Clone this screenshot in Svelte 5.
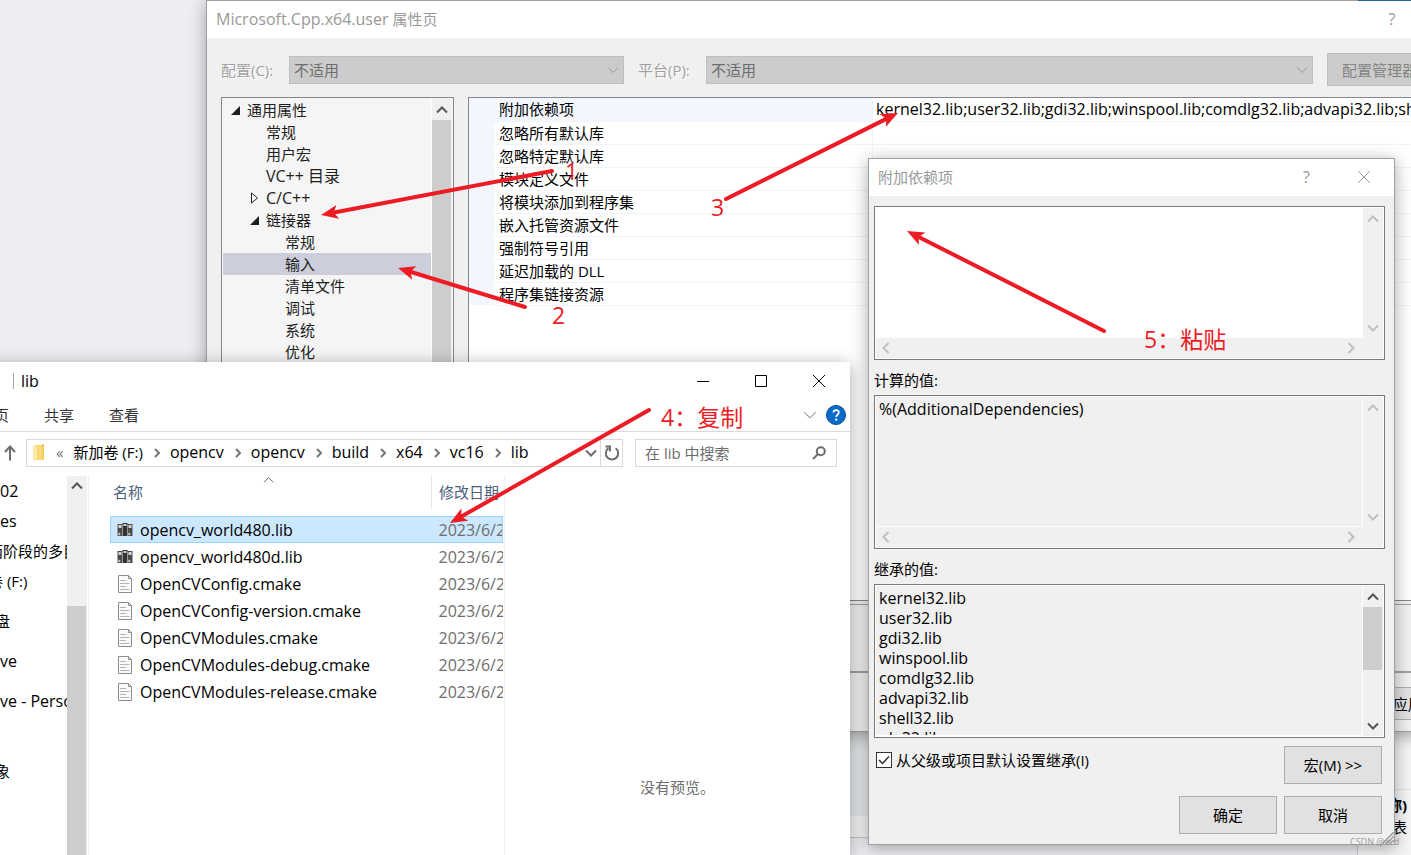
<script lang="ts">
  type Arrow = { from: [number, number]; to: [number, number] };

  const tree = [
    { label: "通用属性", level: 0, state: "open" },
    { label: "常规", level: 1 },
    { label: "用户宏", level: 1 },
    { label: "VC++ 目录", level: 1 },
    { label: "C/C++", level: 1, state: "closed" },
    { label: "链接器", level: 1, state: "open" },
    { label: "常规", level: 2 },
    { label: "输入", level: 2 },
    { label: "清单文件", level: 2 },
    { label: "调试", level: 2 },
    { label: "系统", level: 2 },
    { label: "优化", level: 2 },
  ];
  let selectedNode = $state(7);

  const properties = [
    {
      name: "附加依赖项",
      value:
        "kernel32.lib;user32.lib;gdi32.lib;winspool.lib;comdlg32.lib;advapi32.lib;shell32.lib",
    },
    { name: "忽略所有默认库", value: "" },
    { name: "忽略特定默认库", value: "" },
    { name: "模块定义文件", value: "" },
    { name: "将模块添加到程序集", value: "" },
    { name: "嵌入托管资源文件", value: "" },
    { name: "强制符号引用", value: "" },
    { name: "延迟加载的 DLL", value: "" },
    { name: "程序集链接资源", value: "" },
  ];

  const crumbs = ["新加卷 (F:)", "opencv", "opencv", "build", "x64", "vc16", "lib"];

  const places = [
    { label: "02" },
    { label: "es" },
    { label: "两阶段的多目标", cut: "far" },
    { label: "卷 (F:)", cut: "far" },
    { label: "盘", cut: "near", tall: true },
    { label: "ve", tall: true },
    { label: "ve - Personal", tall: true },
    { label: "象", cut: "near", last: true },
  ];

  const files = [
    { name: "opencv_world480.lib", kind: "lib" },
    { name: "opencv_world480d.lib", kind: "lib" },
    { name: "OpenCVConfig.cmake", kind: "doc" },
    { name: "OpenCVConfig-version.cmake", kind: "doc" },
    { name: "OpenCVModules.cmake", kind: "doc" },
    { name: "OpenCVModules-debug.cmake", kind: "doc" },
    { name: "OpenCVModules-release.cmake", kind: "doc" },
  ];
  let selectedFile = $state(0);

  const inherited = [
    "kernel32.lib",
    "user32.lib",
    "gdi32.lib",
    "winspool.lib",
    "comdlg32.lib",
    "advapi32.lib",
    "shell32.lib",
    "ole32.lib",
  ].join("\n");

  let dependencies = $state("");
  let inherit = $state(true);

  const arrows: Arrow[] = [
    { from: [552, 171], to: [321, 215] },
    { from: [525, 307], to: [398, 268] },
    { from: [726, 199], to: [898, 113] },
    { from: [649, 410], to: [450, 523] },
    { from: [1104, 331], to: [907, 231] },
  ];

  const notes = [
    { text: "1", x: 565, y: 180 },
    { text: "2", x: 552, y: 324 },
    { text: "3", x: 711, y: 216 },
    { text: "4：复制", x: 661, y: 426 },
    { text: "5：粘贴", x: 1144, y: 348 },
  ];

  // Latin text runs a size larger than the Chinese beside it
  function isLatin(text: string) {
    return /^[\x20-\x7e]/.test(text);
  }

  function length(a: Arrow) {
    return Math.hypot(a.to[0] - a.from[0], a.to[1] - a.from[1]);
  }

  function placement(a: Arrow) {
    const deg =
      (Math.atan2(a.to[1] - a.from[1], a.to[0] - a.from[0]) * 180) / Math.PI;
    return `translate(${a.to[0]} ${a.to[1]}) rotate(${deg})`;
  }
</script>

{#snippet chevron(dir: string)}
  <svg class="chevron point-{dir}" viewBox="0 0 12 12" aria-hidden="true">
    <path d="M1 8.5 L6 3.5 L11 8.5" />
  </svg>
{/snippet}

{#snippet closeIcon()}
  <svg class="glyph" viewBox="0 0 12 12" aria-hidden="true">
    <path d="M0 0 L12 12 M12 0 L0 12" />
  </svg>
{/snippet}

<div class="desktop">
  <div class="backdrop">
    <div class="editor">
      <div class="editor-text"></div>
      <div class="editor-scroll"></div>
    </div>
    <div class="side-panel">
      <div class="side-top"></div>
      <div class="side-help">
        <b>称)</b>
        <span>表</span>
      </div>
    </div>
  </div>

  <section class="window pages">
    <header class="titlebar">
      <span class="title"><span class="latin">Microsoft.Cpp.x64.user</span> 属性页</span>
      <button class="caption help-button latin" aria-label="帮助">?</button>
    </header>

    <div class="config">
      <label for="configuration">配置(C):</label>
      <span class="combo short">
        <select id="configuration" disabled><option>不适用</option></select>
        {@render chevron("down")}
      </span>
      <label for="platform">平台(P):</label>
      <span class="combo">
        <select id="platform" disabled><option>不适用</option></select>
        {@render chevron("down")}
      </span>
      <button class="manager" disabled>配置管理器(O)...</button>
    </div>

    <div class="panes">
      <div class="tree">
        <ul>
          {#each tree as node, i}
            <li>
              <button
                class="node level{node.level}"
                class:selected={selectedNode === i}
                class:latin={isLatin(node.label)}
                onclick={() => (selectedNode = i)}
              >
                <span class="twisty">
                  {#if node.state === "open"}
                    <svg viewBox="0 0 9 9"><path d="M9 0 V9 H0 Z" fill="#1e1e1e" /></svg>
                  {:else if node.state === "closed"}
                    <svg viewBox="0 0 9 12"><path d="M1.5 1 L7.5 6 L1.5 11 Z" fill="#fff" stroke="#1e1e1e" /></svg>
                  {/if}
                </span>
                {node.label}
              </button>
            </li>
          {/each}
        </ul>
        <div class="scrollbar">
          <span class="step">{@render chevron("up")}</span>
          <span class="thumb grow"></span>
        </div>
      </div>

      <div class="details">
        <div class="grid">
          <table>
            <tbody>
              {#each properties as p, i}
                <tr class:current={i === 0}>
                  <td class="gutter"></td>
                  <th scope="row">{p.name}</th>
                  <td class="value latin">{p.value}</td>
                </tr>
              {/each}
            </tbody>
          </table>
        </div>
        <div class="description"></div>
      </div>
    </div>

    <footer class="pages-footer">
      <button class="push apply">应用(A)</button>
    </footer>
  </section>
  <div class="accent"></div>

  <section class="window explorer">
    <header class="explorer-title">
      <span class="separator"></span>
      <span class="latin">lib</span>
      <span class="spacer"></span>
      <button class="caption" aria-label="最小化">
        <svg class="glyph" viewBox="0 0 12 12"><path d="M0 6.5 H12" /></svg>
      </button>
      <button class="caption" aria-label="最大化">
        <svg class="glyph" viewBox="0 0 12 12"><path d="M0.5 0.5 H11.5 V11.5 H0.5 Z" /></svg>
      </button>
      <button class="caption" aria-label="关闭">{@render closeIcon()}</button>
    </header>

    <nav class="ribbon">
      <a href="#home">页</a>
      <a href="#share">共享</a>
      <a href="#view">查看</a>
      <span class="spacer"></span>
      <button class="collapse" aria-label="展开功能区">{@render chevron("down")}</button>
      <button class="about" aria-label="帮助">
        <svg viewBox="0 0 20 20">
          <circle cx="10" cy="10" r="9.5" fill="#0a6bcb" stroke="#0a4c94" />
          <path d="M7.4 7.4 C7.4 4.4 12.8 4.4 12.8 7.5 C12.8 9.6 10.2 9.6 10.2 12" fill="none" stroke="#fff" stroke-width="1.8" />
          <circle cx="10.2" cy="14.6" r="1.2" fill="#fff" />
        </svg>
      </button>
    </nav>

    <div class="address-row">
      <button class="up" aria-label="上移">
        <svg viewBox="0 0 12 16"><path d="M6 15.5 V2 M1 7 L6 1.5 L11 7" fill="none" stroke="#6d6d6d" stroke-width="2" /></svg>
      </button>
      <div class="address">
        <svg class="folder" viewBox="0 0 13 18">
          <path d="M3 1 H12 V16 H3 Z" fill="#fbd978" />
          <path d="M10 0 H12 V15 H10 Z" fill="#f3cb5d" />
          <path d="M1 1 L5 3 V17.5 L1 15.5 Z" fill="#ffe9a6" />
        </svg>
        <span class="overflow">«</span>
        {#each crumbs as crumb, i}
          {#if i > 0}
            <svg class="arrow" viewBox="0 0 6 10"><path d="M1 1 L5 5 L1 9" /></svg>
          {/if}
          <a href="#crumb{i}" class:latin={isLatin(crumb)}>{crumb}</a>
        {/each}
        <span class="spacer"></span>
        <button class="history" aria-label="以前的位置">{@render chevron("down")}</button>
        <button class="refresh" aria-label="刷新">
          <svg viewBox="0 0 16 16">
            <path d="M4.5 3.2 A6.2 6.2 0 1 0 11.6 3.3" fill="none" stroke="#6d6d6d" stroke-width="2" />
            <path d="M1.5 1.6 H6 V6.6" fill="none" stroke="#6d6d6d" stroke-width="2" />
          </svg>
        </button>
      </div>
      <div class="search">
        <input type="text" aria-label="搜索" placeholder="在 lib 中搜索" />
        <svg viewBox="0 0 14 14">
          <circle cx="8.8" cy="5.2" r="4" fill="none" stroke="#6d6d6d" stroke-width="2" />
          <path d="M6 8 L1 13" stroke="#6d6d6d" stroke-width="2" />
        </svg>
      </div>
    </div>

    <div class="browser">
      <ul class="places">
        {#each places as place}
          <li
            class:far={place.cut === "far"}
            class:near={place.cut === "near"}
            class:tall={place.tall}
            class:last={place.last}
            class:latin={isLatin(place.label)}
          >
            {place.label}
          </li>
        {/each}
      </ul>
      <div class="scrollbar">
        <span class="step">{@render chevron("up")}</span>
        <span class="track"></span>
        <span class="thumb grow"></span>
      </div>

      <div class="files">
        <table>
          <thead>
            <tr>
              <th scope="col">名称<span class="sort">{@render chevron("up")}</span></th>
              <th scope="col" class="date">修改日期</th>
            </tr>
          </thead>
          <tbody>
            {#each files as file, i}
              <tr class:selected={selectedFile === i} onclick={() => (selectedFile = i)}>
                <td>
                  <span class="file latin">
                    {#if file.kind === "lib"}
                      <svg viewBox="0 0 16 16">
                        <path d="M0.5 2 H5.5 V14 H0.5 Z M10.5 2 H15.5 V14 H10.5 Z" fill="#4a4a4a" />
                        <path d="M5.5 1 H10.5 V14 H5.5 Z" fill="#333" />
                        <path d="M1.5 3 H4.5 V6 H1.5 Z M6.5 2 H9.5 V4 H6.5 Z M11.5 3 H14.5 V6 H11.5 Z" fill="#d4d4d4" />
                        <path d="M1.5 11 H3 V13 H1.5 Z M11.5 11 H13 V13 H11.5 Z M5.5 3 V14 M10.5 3 V14" fill="#c4c4c4" stroke="#b8b8b8" stroke-width="0.6" />
                      </svg>
                    {:else}
                      <svg viewBox="0 0 16 18">
                        <path d="M1.5 0.5 H11.5 L14.5 3.5 V17.5 H1.5 Z" fill="#fafafa" stroke="#8c8c8c" />
                        <path d="M11.5 0.5 V3.5 H14.5" fill="none" stroke="#8c8c8c" />
                        <path d="M3 5.5 H9 M3 8.5 H12.5 M3 11.5 H9 M3 14.5 H12.5" stroke="#b4b4b4" />
                      </svg>
                    {/if}
                    {file.name}
                  </span>
                </td>
                <td class="date latin">2023/6/28</td>
              </tr>
            {/each}
          </tbody>
        </table>
      </div>
      <div class="preview">没有预览。</div>
    </div>
  </section>

  <section class="window dialog">
    <header class="titlebar">
      <span class="title">附加依赖项</span>
      <button class="caption help-button latin" aria-label="帮助">?</button>
      <button class="caption" aria-label="关闭">{@render closeIcon()}</button>
    </header>

    <div class="dialog-body">
      <div class="box editable">
        <textarea class="latin" aria-label="附加依赖项" bind:value={dependencies}></textarea>
        <div class="scrollbar off">
          <span class="step">{@render chevron("up")}</span>
          <span class="track"></span>
          <span class="step">{@render chevron("down")}</span>
        </div>
        <div class="hscroll off">
          {@render chevron("left")}
          {@render chevron("right")}
        </div>
      </div>

      <label class="caption-label" for="evaluated">计算的值:</label>
      <div class="box">
        <textarea class="latin" id="evaluated" readonly value="%(AdditionalDependencies)"></textarea>
        <div class="scrollbar off">
          <span class="step">{@render chevron("up")}</span>
          <span class="track"></span>
          <span class="step">{@render chevron("down")}</span>
        </div>
        <div class="hscroll off">
          {@render chevron("left")}
          {@render chevron("right")}
        </div>
      </div>

      <label class="caption-label" for="inherited">继承的值:</label>
      <div class="box single">
        <textarea class="latin" id="inherited" readonly value={inherited}></textarea>
        <div class="scrollbar">
          <span class="step">{@render chevron("up")}</span>
          <span class="thumb"></span>
          <span class="track"></span>
          <span class="step">{@render chevron("down")}</span>
        </div>
      </div>

      <div class="options">
        <label class="check">
          <span class="tick">
            <input type="checkbox" bind:checked={inherit} />
            {#if inherit}
              <svg viewBox="0 0 16 16"><path d="M3 8 L6.5 11.5 L13 4.5" fill="none" stroke="#333" stroke-width="1.5" /></svg>
            {/if}
          </span>
          从父级或项目默认设置继承(I)
        </label>
        <button class="push">宏(M) &gt;&gt;</button>
      </div>
      <div class="actions">
        <button class="push">确定</button>
        <button class="push">取消</button>
      </div>
    </div>
    <svg class="grip" viewBox="0 0 12 12">
      <path d="M0 12 L12 0 M4 12 L12 4 M8 12 L12 8" stroke="#9a9a9a" stroke-width="1.5" />
    </svg>
  </section>

  <span class="watermark">CSDN @w.d</span>

  <svg class="notes">
    {#each arrows as arrow}
      <g transform={placement(arrow)}>
        <path
          d="M{-length(arrow)} 0 H-12"
          stroke="#ed1c24"
          stroke-width="4"
          stroke-linecap="round"
        />
        <path d="M0 0 L-17 -7 L-13 0 L-17 7 Z" fill="#ed1c24" />
      </g>
    {/each}
    {#each notes as note}
      <text x={note.x} y={note.y}>{note.text}</text>
    {/each}
  </svg>
</div>

<style>
  :global(body) {
    overflow: hidden;
  }

  .desktop {
    position: relative;
    height: 100vh;
    overflow: hidden;
    background: #eeedf2;
    color: #000;
    font-family: "Open Sans", "Noto Sans CJK SC", sans-serif;
    font-size: 15px;
    line-height: 20px;
  }

  button,
  input,
  select,
  textarea {
    box-sizing: border-box;
    margin: 0;
    padding: 0;
    border: none;
    border-radius: 0;
    background: none;
    color: inherit;
    font: inherit;
    outline: none;
  }

  .latin {
    font-size: 16px;
  }

  ul {
    margin: 0;
    padding: 0;
    list-style: none;
  }

  a {
    color: inherit;
    text-decoration: none;
  }

  table {
    border-collapse: collapse;
    table-layout: fixed;
    width: 100%;
  }

  th,
  td {
    padding: 0;
    font-weight: 400;
    text-align: left;
    white-space: nowrap;
  }

  svg {
    display: block;
    flex: none;
  }

  .spacer {
    flex: 1;
  }

  .window {
    position: absolute;
    box-sizing: border-box;
    display: flex;
    flex-direction: column;
    border: 1px solid #a0a0a0;
    background: #f0f0f0;
    box-shadow: 0 3px 16px rgba(0, 0, 0, 0.34);
  }

  /* --- BACKDROP --- */
  .backdrop {
    position: absolute;
    inset: 732px 0 0 50%;
    display: flex;
  }

  .editor {
    flex: 1;
    display: flex;
    flex-direction: column;
  }

  .editor-text {
    height: 84px;
    background: #e6e9eb;
  }

  .editor-scroll {
    height: 21px;
    border-bottom: 1px solid #c4c4cc;
    background: #f5f5f5;
  }

  .side-panel {
    width: 53px;
    border-left: 1px solid #cccedb;
    background: #f5f5f5;
  }

  .side-top {
    height: 57px;
    border-bottom: 1px solid #e2e2e6;
  }

  .side-help {
    display: flex;
    flex-direction: column;
    align-items: flex-end;
    padding: 4px 4px 0;
    line-height: 22px;
  }

  /* --- SHARED PARTS --- */
  .titlebar {
    display: flex;
    align-items: center;
    box-sizing: border-box;
    height: 37px;
    padding: 0 1px 2px 9px;
    background: #fff;
    color: #999;
  }

  .title {
    flex: 1;
  }

  .caption {
    display: flex;
    align-items: center;
    justify-content: center;
    width: 58px;
    height: 36px;
  }

  .glyph {
    width: 12px;
    height: 12px;
    fill: none;
    stroke: currentColor;
  }

  .chevron {
    width: 12px;
    height: 12px;
    fill: none;
    stroke: #555;
    stroke-width: 2;
  }

  .point-down {
    transform: rotate(180deg);
  }

  .point-left {
    transform: rotate(-90deg);
  }

  .point-right {
    transform: rotate(90deg);
  }

  .off .chevron {
    stroke: #bfbfbf;
  }

  .scrollbar {
    display: flex;
    flex-direction: column;
    flex: none;
    width: 20px;
    background: #f0f0f0;
  }

  .step {
    display: flex;
    align-items: center;
    justify-content: center;
    width: 19px;
    height: 21px;
  }

  .track {
    flex: 1;
  }

  .thumb {
    width: 19px;
    height: 63px;
    background: #cdcdcd;
  }

  .grow {
    flex: 1;
  }

  .push {
    width: 98px;
    height: 38px;
    border: 1px solid #adadad;
    background: #e1e1e1;
  }

  /* --- PROPERTY PAGES --- */
  .pages {
    inset: 0 -60px auto 206px;
  }

  .accent {
    position: absolute;
    top: 0;
    right: 0;
    width: 53px;
    height: 1px;
    background: #2a6496;
  }

  .pages .help-button {
    margin-right: 48px;
  }

  .config {
    display: flex;
    align-items: center;
    height: 59px;
    padding: 4px 13px 0 14px;
    box-sizing: border-box;
    color: #a0a0a0;
  }

  .config label {
    width: 68px;
    flex: none;
    text-shadow: 1px 1px #fff;
  }

  .combo {
    position: relative;
    flex: 1;
    margin-right: 14px;
  }

  .combo.short {
    flex: none;
    width: 335px;
  }

  .combo select {
    appearance: none;
    display: block;
    width: 100%;
    height: 28px;
    padding-left: 4px;
    border: 1px solid #bfbfbf;
    background: #cccccc;
    color: #6d6d6d;
    opacity: 1;
  }

  .combo .chevron {
    position: absolute;
    top: 8px;
    right: 5px;
    stroke: #9a9a9a;
    stroke-width: 1;
  }

  .manager {
    width: 130px;
    height: 33px;
    padding-left: 14px;
    overflow: hidden;
    border: 1px solid #bfbfbf;
    background: #cccccc;
    color: #838383;
    text-align: left;
    white-space: nowrap;
  }

  .panes {
    display: flex;
    gap: 14px;
    padding: 0 13px 0 14px;
  }

  .tree {
    display: flex;
    box-sizing: border-box;
    width: 233px;
    height: 576px;
    padding: 1px;
    border: 1px solid #828790;
    background: #f5f5f5;
  }

  .tree ul {
    flex: 1;
  }

  .tree .scrollbar {
    border-left: 1px solid #fff;
  }

  .node {
    display: flex;
    align-items: center;
    width: 100%;
    height: 22px;
    color: #1e1e1e;
  }

  .node.selected {
    background: #cccedb;
  }

  .level0 {
    padding-left: 8px;
  }

  .level1 {
    padding-left: 27px;
  }

  .level2 {
    padding-left: 46px;
  }

  .twisty {
    width: 16px;
  }

  .twisty svg {
    width: 9px;
  }

  .details {
    display: flex;
    flex: 1;
    flex-direction: column;
    gap: 3px;
    min-width: 0;
  }

  .grid {
    flex: 1;
    border: 1px solid #828790;
    background: #fff;
  }

  .grid tr {
    height: 23px;
  }

  .grid th,
  .grid .value {
    border-bottom: 1px solid #eff3fa;
  }

  .grid th {
    width: 373px;
    padding-left: 5px;
    border-right: 1px solid #eff3fa;
  }

  .grid .gutter {
    width: 25px;
    background: #f3f7fd;
  }

  .grid .current th {
    background: #f3f7fd;
  }

  .grid .value {
    padding-left: 3px;
    overflow: hidden;
  }

  .description {
    height: 66px;
    border: 1px solid #a0a0a0;
    border-bottom-width: 2px;
  }

  .pages-footer {
    display: flex;
    justify-content: flex-end;
    padding: 14px 13px 11px;
  }

  .apply {
    width: 80px;
    height: 33px;
  }

  /* --- EXPLORER --- */
  .explorer {
    inset: 362px auto 0 -16px;
    width: 866px;
    border: none;
    background: #fff;
  }

  .explorer-title {
    display: flex;
    align-items: center;
    height: 38px;
    padding: 0 2px 0 29px;
  }

  .separator {
    width: 1px;
    height: 16px;
    margin-right: 7px;
    background: #a0a0a0;
  }

  .ribbon {
    display: flex;
    align-items: center;
    box-sizing: border-box;
    height: 32px;
    padding: 0 4px 2px 10px;
    border-bottom: 1px solid #dadbdc;
    color: #333;
  }

  .ribbon a {
    margin-right: 35px;
  }

  .collapse .chevron {
    width: 14px;
    height: 14px;
    stroke: #a0a0a0;
    stroke-width: 1;
  }

  .about {
    margin-left: 9px;
  }

  .about svg {
    width: 20px;
  }

  .address-row {
    display: flex;
    align-items: center;
    padding: 7px 13px 9px 20px;
  }

  .up svg {
    width: 12px;
  }

  .up {
    margin-right: 10px;
  }

  .address {
    display: flex;
    flex: 1;
    align-items: center;
    box-sizing: border-box;
    height: 28px;
    margin-right: 12px;
    padding-left: 5px;
    border: 1px solid #d9d9d9;
  }

  .address a {
    height: 22px;
  }

  .folder {
    width: 13px;
    height: 18px;
  }

  .overflow {
    height: 22px;
    margin: 0 10px 0 11px;
    color: #6d6d6d;
  }

  .arrow {
    width: 6px;
    margin: 0 10px 0 11px;
    fill: none;
    stroke: #777;
    stroke-width: 2;
  }

  .history {
    padding: 0 3px;
  }

  .history .chevron {
    stroke: #6d6d6d;
  }

  .refresh {
    display: flex;
    align-items: center;
    justify-content: center;
    width: 22px;
    height: 26px;
    border-left: 1px solid #d9d9d9;
  }

  .refresh svg {
    width: 16px;
  }

  .search {
    display: flex;
    align-items: center;
    box-sizing: border-box;
    width: 202px;
    height: 28px;
    padding: 0 10px 0 9px;
    border: 1px solid #d9d9d9;
  }

  .search input {
    flex: 1;
    min-width: 0;
  }

  .search input::placeholder {
    color: #6d6d6d;
    opacity: 1;
  }

  .search svg {
    width: 14px;
  }

  .browser {
    display: flex;
    flex: 1;
    min-height: 0;
  }

  .places {
    flex: none;
    width: 67px;
    padding-left: 16px;
    overflow: hidden;
    white-space: nowrap;
  }

  .places li {
    height: 30px;
    line-height: 30px;
  }

  .places .far {
    margin-left: -12px;
  }

  .places .near {
    margin-left: -5px;
  }

  .places .tall {
    height: 40px;
    line-height: 50px;
  }

  .places .last {
    height: 70px;
    line-height: 110px;
  }

  .browser .step {
    height: 20px;
  }

  .browser .track {
    flex: none;
    height: 110px;
  }

  .files {
    flex: none;
    width: 393px;
    margin-left: 1px;
    padding-left: 21px;
    padding-right: 1px;
    overflow: hidden;
    border-left: 1px solid #f0f0f0;
    border-right: 1px solid #f0f0f0;
  }

  .files th {
    position: relative;
    height: 32px;
    padding-left: 3px;
    color: #4c607a;
  }

  .files thead::after {
    content: "";
    display: block;
    height: 8px;
  }

  .sort {
    position: absolute;
    top: -2px;
    left: 153px;
  }

  .sort .chevron {
    width: 11px;
    stroke-width: 1;
  }

  .files .date {
    width: 64px;
    padding-left: 7px;
    overflow: hidden;
    color: #6d6d6d;
  }

  .files th.date {
    border-left: 1px solid #e5e5e5;
    color: #4c607a;
  }

  .files tbody tr {
    height: 27px;
  }

  .files tr.selected {
    background: #cce8ff;
    outline: 1px solid #99d1ff;
    outline-offset: -1px;
  }

  .file {
    display: flex;
    align-items: center;
    gap: 7px;
    padding-left: 7px;
  }

  .file svg {
    width: 16px;
  }

  .preview {
    display: flex;
    flex: 1;
    align-items: center;
    justify-content: center;
    padding-top: 242px;
    color: #6d6d6d;
  }

  /* --- DIALOG --- */
  .dialog {
    top: 158px;
    left: 868px;
    width: 527px;
  }

  .dialog .help-button {
    width: 57px;
  }

  .dialog-body {
    padding: 10px 9px 10px 5px;
  }

  .box {
    display: grid;
    box-sizing: border-box;
    grid-template: 1fr 20px / 1fr 20px;
    height: 154px;
    padding: 1px;
    border: 1px solid #7a7a7a;
    background: #f0f0f0;
    box-shadow: inset 0 0 0 1px #fff;
  }

  .box textarea {
    width: 100%;
    height: 100%;
    padding: 2px 3px;
    overflow: hidden;
    border-right: 1px solid #fff;
    border-bottom: 1px solid #fff;
    font-size: 16px;
    resize: none;
  }

  .box.single {
    grid-template: 1fr / 1fr 20px;
  }

  .editable textarea {
    background: #fff;
  }

  .hscroll {
    display: flex;
    align-items: center;
    justify-content: space-between;
    padding: 0 6px 0 4px;
  }

  .caption-label {
    display: block;
    height: 20px;
    padding: 10px 0 5px;
  }

  .options {
    display: flex;
    justify-content: space-between;
    padding: 8px 3px 12px 2px;
  }

  .check {
    display: flex;
    align-items: center;
    gap: 4px;
    height: 28px;
  }

  .tick {
    position: relative;
    width: 16px;
    height: 16px;
  }

  .tick input {
    appearance: none;
    display: block;
    width: 16px;
    height: 16px;
    border: 1px solid #333;
    background: #fff;
  }

  .tick svg {
    position: absolute;
    inset: 0;
    pointer-events: none;
  }

  .actions {
    display: flex;
    justify-content: flex-end;
    gap: 7px;
    padding-right: 3px;
  }

  .grip {
    position: absolute;
    right: 0;
    bottom: 0;
    width: 12px;
  }

  .watermark {
    position: absolute;
    top: 832px;
    left: 1350px;
    color: #9a9a9a;
    font-size: 9px;
  }

  /* --- ANNOTATIONS --- */
  .notes {
    position: absolute;
    inset: 0;
    width: 100%;
    height: 100%;
    pointer-events: none;
  }

  .notes text {
    fill: #ed1c24;
    font-size: 23px;
  }
</style>
